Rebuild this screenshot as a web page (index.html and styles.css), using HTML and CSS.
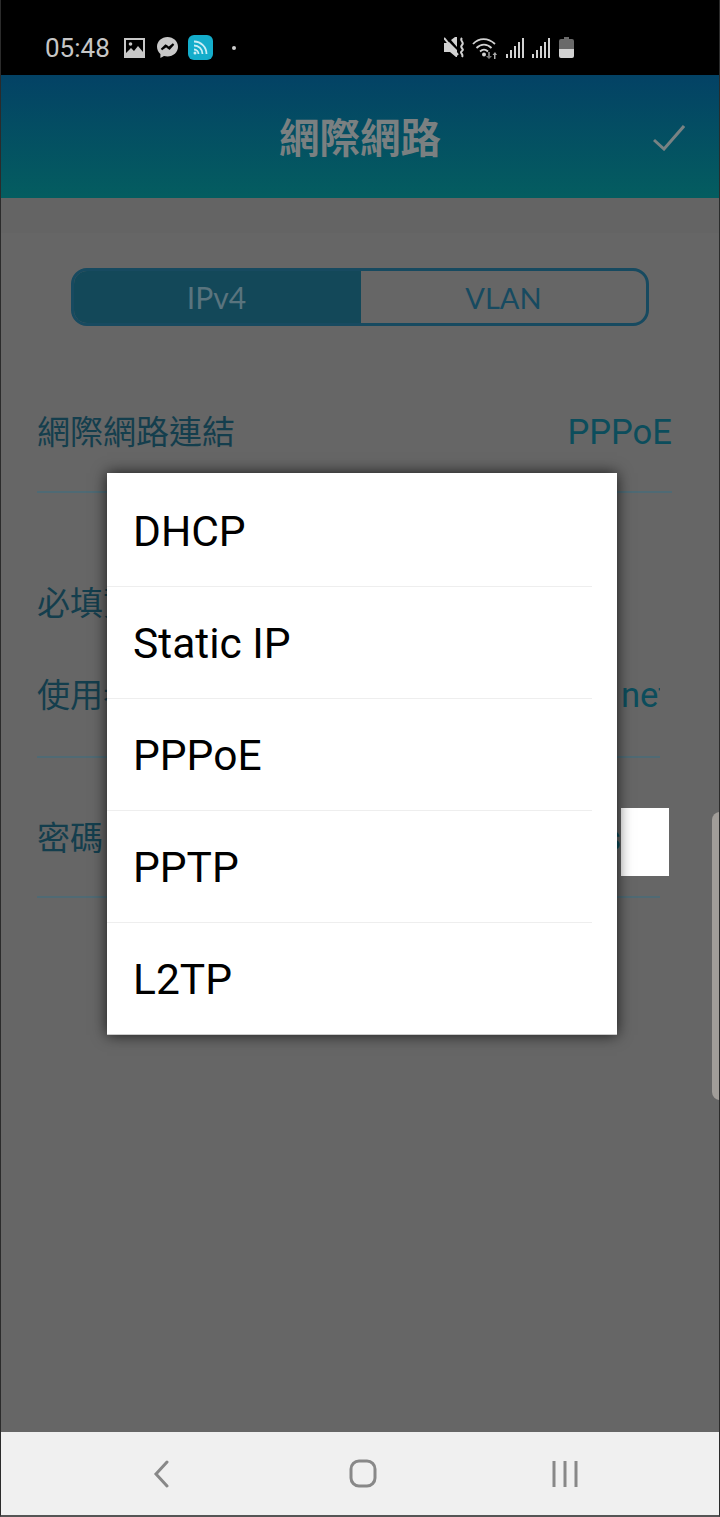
FILE: index.html
```html
<!DOCTYPE html>
<html lang="zh-Hant">
<head>
    <meta charset="UTF-8">
    <meta name="viewport" content="width=device-width, initial-scale=1.0">
    <title>網際網路</title>
    <link rel="stylesheet" href="styles.css">
</head>
<body>
    <div class="status-bar">
        <span class="clock">05:48</span>
        <svg class="ic-picture" width="21" height="20" viewBox="0 0 21 20">
            <path fill="#c8c8c8" fill-rule="evenodd" d="M0 0h21v20H0zM2 2v13l5-5 3 3 4-5 5 6V2z"/>
            <circle cx="6.500" cy="6" r="1.800" fill="#c8c8c8"/>
        </svg>
        <svg class="ic-messenger" width="21" height="21" viewBox="0 0 21 21">
            <path fill="#c8c8c8" d="M10.500 0C4.700 0 0 4.300 0 9.800c0 2.900 1.300 5.400 3.400 7.100V21l3.600-2c1.100.3 2.300.5 3.500.5 5.800 0 10.500-4.300 10.500-9.700S16.300 0 10.500 0z"/>
            <path fill="none" stroke="#000" stroke-width="2" d="M4.500 12.500l4-4 3 2.500 5-4-4 4.500-3-2.500z"/>
        </svg>
        <svg class="ic-app" width="25" height="25" viewBox="0 0 25 25">
            <rect width="25" height="25" rx="6" fill="#14adcb"/>
            <g fill="none" stroke="#c9eef5" stroke-width="1.800">
                <path d="M6 6.500c7 0 12.500 5.500 12.500 12.500"/>
                <path d="M6 10.500c4.700 0 8.500 3.800 8.500 8.500"/>
                <path d="M6 14.500c2.500 0 4.500 2 4.500 4.500"/>
            </g>
            <circle cx="7" cy="18" r="1.500" fill="#c9eef5"/>
        </svg>
        <span class="dot"></span>
        <div class="status-right">
            <svg width="21" height="21" viewBox="0 0 21 21">
                <path fill="#d2d2d2" d="M0 6h4l1-1 8 8v7l-1 0-6-5H0zM7 3l4-3h2v10z"/>
                <path fill="none" stroke="#d2d2d2" stroke-width="2" d="M0 1l14 17M18 1c-3 3 3 4 0 7s3 4 0 6 2 3 0 6"/>
            </svg>
            <svg class="ic-wifi" width="25" height="22" viewBox="0 0 25 22">
                <g fill="none" stroke="#d2d2d2" stroke-width="1.800">
                    <path d="M1 7c6-6.500 15-6.500 22 0"/>
                    <path d="M4.500 11c4.500-4.500 10.500-4.500 15 0"/>
                    <path d="M8 14.500c2.500-2.300 5.500-2.300 8 0"/>
                </g>
                <circle cx="12" cy="17.500" r="2" fill="#d2d2d2"/>
                <path fill="#777" d="M16 15h2v4h2l-3 3-3-3h2z"/>
                <path fill="#aaa" d="M22 22v-4h-1.500l2.500-3 2 3h-1.500v4z"/>
            </svg>
            <svg class="ic-signal" width="18" height="20" viewBox="0 0 18 20">
                <path fill="#d2d2d2" d="M0 16h2v4H0zM4 12h2v8H4zM8 8h2v12H8z"/>
                <path fill="#d2d2d2" d="M12 4h2v16h-2zM16 0h2v20h-2z"/>
            </svg>
            <svg class="ic-signal" width="18" height="20" viewBox="0 0 18 20">
                <path fill="#d2d2d2" d="M0 16h2v4H0zM4 12h2v8H4zM8 8h2v12H8z"/>
                <path fill="#d2d2d2" d="M12 4h2v16h-2zM16 0h2v20h-2z"/>
            </svg>
            <svg class="ic-battery" width="15" height="21" viewBox="0 0 15 21">
                <path fill="#6a6a6a" d="M5 0h5v2h3a2 2 0 0 1 2 2v8H0V4a2 2 0 0 1 2-2h3z"/>
                <path fill="#d2d2d2" d="M0 12h15v7a2 2 0 0 1-2 2H2a2 2 0 0 1-2-2z"/>
            </svg>
        </div>
    </div>

    <div class="app-header">
        <h1>網際網路</h1>
        <svg class="ic-check" width="32" height="26" viewBox="0 0 32 26">
            <path fill="none" stroke="#788283" stroke-width="3" d="M1 15l10 9L31 1"/>
        </svg>
    </div>

    <div class="content">
        <div class="band"></div>
        <div class="tabs">
            <div class="tab tab-on">IPv4</div>
            <div class="tab">VLAN</div>
        </div>

        <div class="row row-conn">
            <span class="label">網際網路連結</span>
            <span class="value">PPPoE</span>
        </div>

        <div class="section-title">必填資訊</div>

        <div class="row row-short row-user">
            <span class="label">使用者名稱</span>
            <span class="value value-clip">net</span>
        </div>

        <div class="row row-short row-pass">
            <span class="label">密碼</span>
            <span class="value value-pass">pass</span>
            <span class="pass-box"></span>
        </div>

        <div class="scroll-thumb"></div>

        <div class="dialog">
            <div class="dialog-item">DHCP</div>
            <div class="dialog-item">Static IP</div>
            <div class="dialog-item">PPPoE</div>
            <div class="dialog-item">PPTP</div>
            <div class="dialog-item">L2TP</div>
        </div>
    </div>

    <div class="nav-bar">
        <svg width="18" height="28" viewBox="0 0 18 28">
            <path fill="none" stroke="#888" stroke-width="3" stroke-linecap="round" d="M14 2L3 14l11 12"/>
        </svg>
        <svg width="28" height="29" viewBox="0 0 28 29">
            <rect x="2" y="2" width="24" height="25" rx="8" fill="none" stroke="#888" stroke-width="3"/>
        </svg>
        <svg width="28" height="28" viewBox="0 0 28 28">
            <path fill="none" stroke="#888" stroke-width="3" d="M3 1v26M14 1v26M25 1v26"/>
        </svg>
    </div>
</body>
</html>
```

FILE: styles.css
```css
html, body { margin: 0; padding: 0; }
body { width: 720px; height: 1517px; box-sizing: border-box; overflow: hidden; display: flex; flex-direction: column; background: #666; font-family: Roboto, "Noto Sans CJK TC", sans-serif; border-left: 1px solid #2b2b2b; border-right: 1px solid #2b2b2b; border-bottom: 2px solid #555; }

.status-bar { height: 75px; flex: none; background: #000; margin: 0 -1px; display: flex; align-items: center; padding-left: 45px; padding-top: 20px; box-sizing: border-box; }
.clock { color: #c6c6c6; font-size: 26px; width: 79px; }
.ic-messenger { margin-left: 12px; }
.ic-app { margin-left: 10px; }
.dot { width: 4px; height: 4px; border-radius: 50%; background: #ccc; margin-left: 19px; }
.status-right { display: flex; align-items: center; margin-left: 208px; }
.ic-wifi { margin-left: 7px; }
.ic-signal { margin-left: 9px; }
.ic-signal + .ic-signal { margin-left: 8px; }
.ic-battery { margin-left: 9px; }

.app-header { height: 123px; flex: none; display: flex; align-items: center; justify-content: center; position: relative; background: linear-gradient(#034265, #045d60); box-sizing: border-box; padding-bottom: 3px; }
.app-header h1 { margin: 0; font-size: 40.500px; font-weight: 700; color: #7a8081; font-family: "Noto Sans CJK TC", sans-serif; }
.ic-check { position: absolute; right: 34px; top: 50px; }

.content { flex: 1; position: relative; overflow: hidden; }
.band { height: 35px; background: #646464; }

.tabs { display: flex; height: 58px; box-sizing: border-box; margin: 35px 70px 0; border: 3px solid #174a60; border-radius: 16px; overflow: hidden; font-family: Lato, sans-serif; }
.tab { flex: 1; display: flex; align-items: center; justify-content: center; font-size: 29px; color: #174a60; }
.tab-on { background: #134859; color: #5a747e; font-size: 30px; padding-right: 2px; flex: none; width: 287px; box-sizing: border-box; }

.row { display: flex; align-items: center; justify-content: space-between; margin-left: 36px; margin-right: 47px; border-bottom: 2px solid #4f6a74; box-sizing: border-box; }
.row-conn { margin-top: 46px; margin-right: 47px; height: 121px; }
.label { font-size: 33px; color: #143e4d; font-family: "Noto Sans CJK TC", sans-serif; white-space: nowrap; margin-bottom: 4px; }
.value { font-size: 34.600px; color: #0c4d5c; }
.section-title { margin: 80px 0 0 36px; height: 60px; line-height: 56px; font-size: 33px; color: #143e4d; font-family: "Noto Sans CJK TC", sans-serif; }
.row-short { margin-right: 59px; }
.row-user { height: 125px; }
.row-pass { margin-top: 22px; height: 118px; }
.value-clip { width: 39px; overflow: hidden; white-space: nowrap; }
.value-pass { margin-left: auto; }
.pass-box { width: 48px; height: 68px; background: #fff; margin-right: -9px; margin-top: 8px; flex: none; }

.scroll-thumb { position: absolute; right: -1px; top: 614px; width: 8px; height: 288px; background: #a19d99; border-radius: 8px 0 0 8px; }

.dialog { position: absolute; left: 106px; top: 275px; width: 510px; box-sizing: border-box; padding-top: 2px; background: #fff; box-shadow: 0 0 14px rgba(0,0,0,.75); border-bottom: 1px solid #ccc; }
.dialog-item { height: 112px; box-sizing: border-box; padding-left: 26px; padding-top: 1px; display: flex; align-items: center; font-size: 42.500px; color: #000; position: relative; }
.dialog-item:last-child { height: 111px; }
.dialog-item::after { content: ""; position: absolute; left: 0; right: 25px; bottom: 0; height: 1px; background: #eee; }
.dialog-item:last-child::after { display: none; }

.nav-bar { height: 83px; flex: none; background: #f0f0f0; display: flex; align-items: center; padding-left: 152px; box-sizing: border-box; }
.nav-bar svg:nth-child(2) { margin-left: 178px; }
.nav-bar svg:nth-child(3) { margin-left: 174px; }
```
